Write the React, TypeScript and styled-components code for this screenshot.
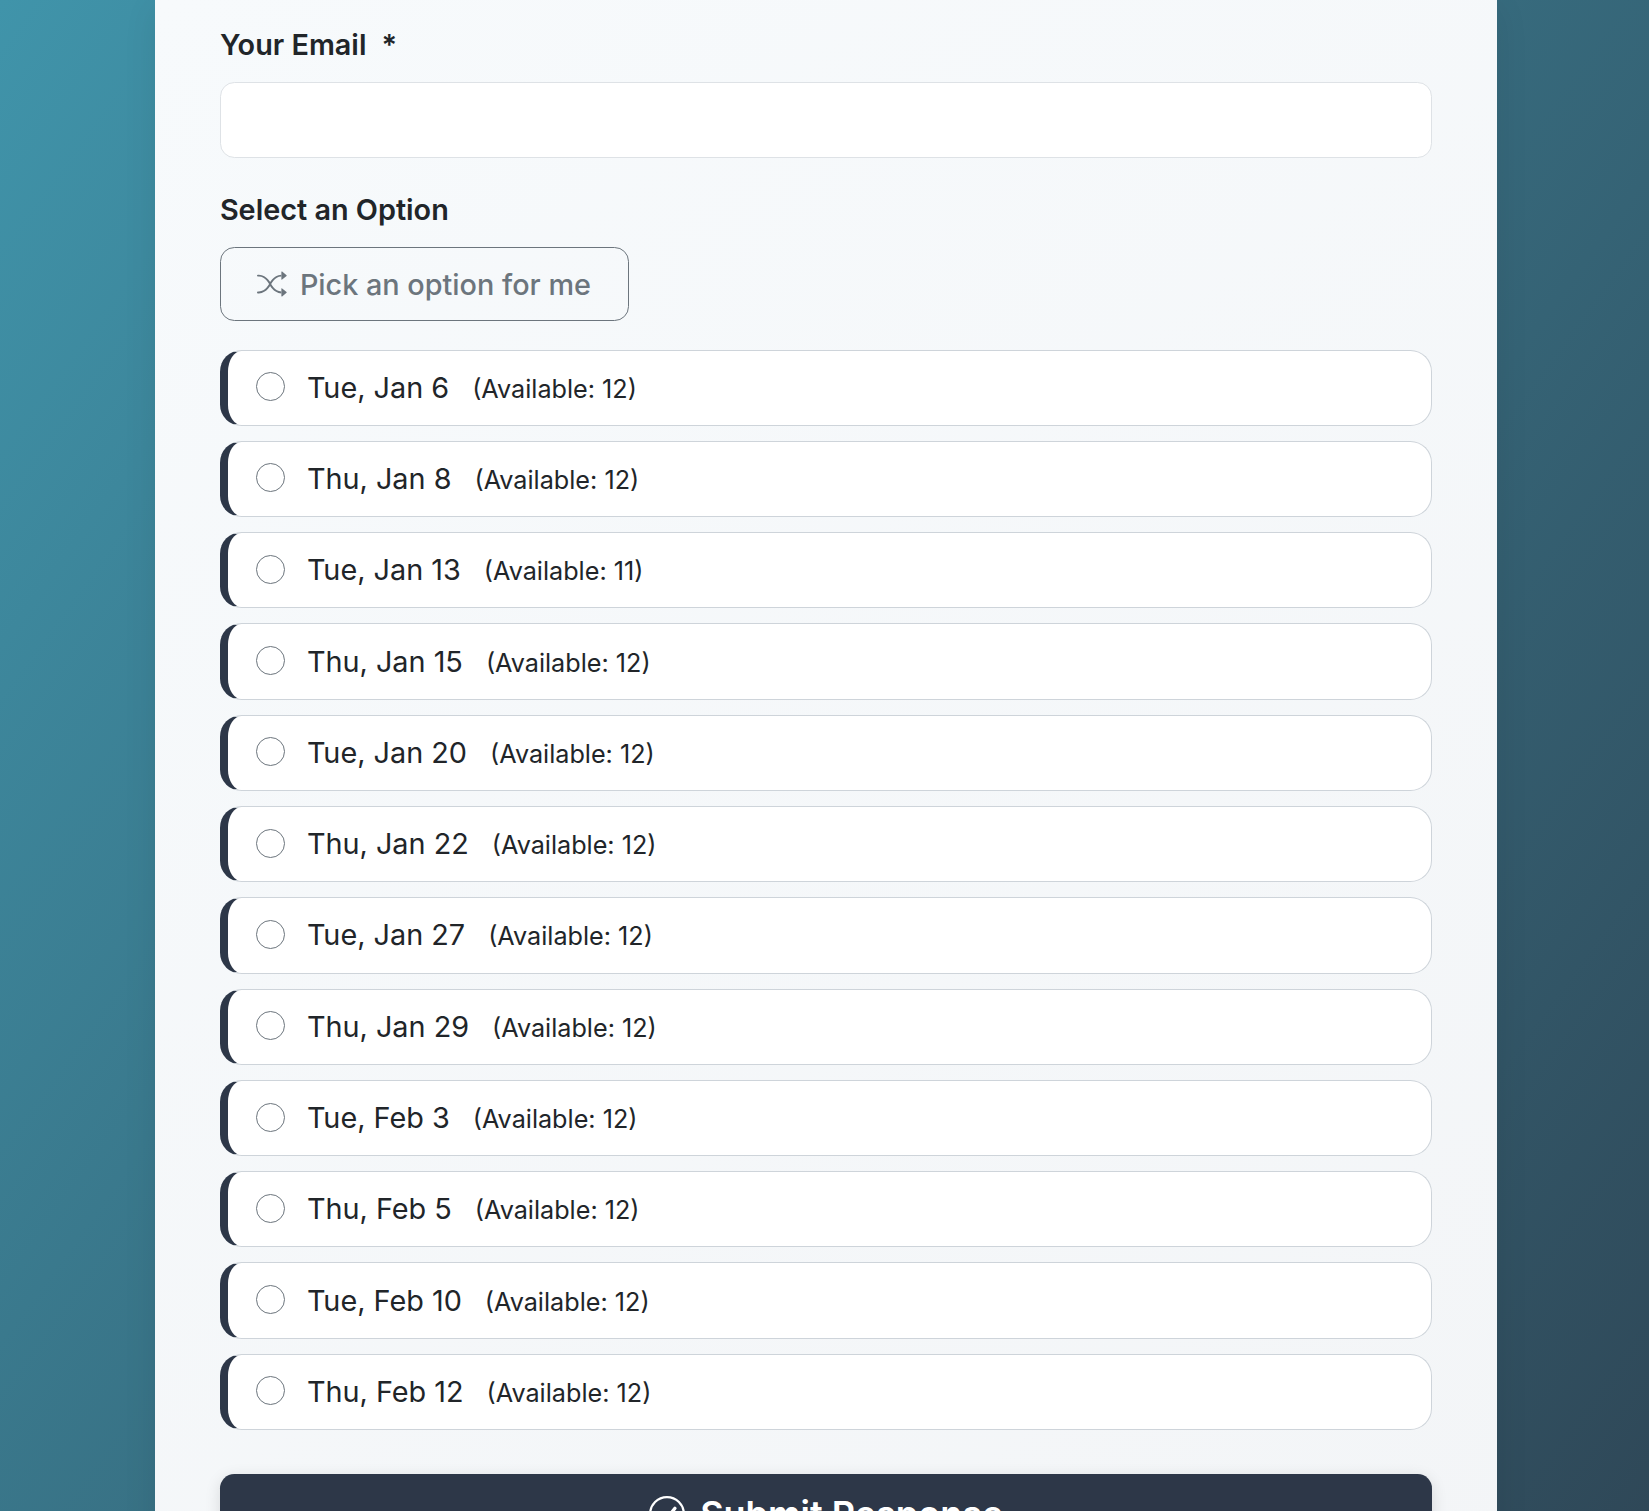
import React from "react";
import styled, { createGlobalStyle } from "styled-components";
import { BsShuffle, BsCheckCircle } from "react-icons/bs";

interface Slot {
  date: string;
  available: number;
}

const slots: Slot[] = [
  { date: "Tue, Jan 6", available: 12 },
  { date: "Thu, Jan 8", available: 12 },
  { date: "Tue, Jan 13", available: 11 },
  { date: "Thu, Jan 15", available: 12 },
  { date: "Tue, Jan 20", available: 12 },
  { date: "Thu, Jan 22", available: 12 },
  { date: "Tue, Jan 27", available: 12 },
  { date: "Thu, Jan 29", available: 12 },
  { date: "Tue, Feb 3", available: 12 },
  { date: "Thu, Feb 5", available: 12 },
  { date: "Tue, Feb 10", available: 12 },
  { date: "Thu, Feb 12", available: 12 },
];

function App() {
  return (
    <>
      <GlobalStyle />
      <Page>
        <Card>
          <Label>
            Your Email<Required>*</Required>
          </Label>
          <EmailInput type="email" />

          <Label>Select an Option</Label>
          <PickButton type="button">
            <BsShuffle size={30} />
            Pick an option for me
          </PickButton>

          <OptionList>
            {slots.map((slot) => (
              <Option key={slot.date}>
                <Radio type="radio" name="slot" />
                <OptionDate>{slot.date}</OptionDate>
                <Availability>(Available: {slot.available})</Availability>
              </Option>
            ))}
          </OptionList>

          <SubmitButton type="button">
            <BsCheckCircle size={36} />
            Submit Response
          </SubmitButton>
        </Card>
      </Page>
    </>
  );
}

export default App;

const GlobalStyle = createGlobalStyle`
  html, body {
    margin: 0;
    padding: 0;
  }

  body {
    font-family: Inter, "Liberation Sans", sans-serif;
    overflow: hidden;
  }
`;

const Page = styled.div`
  height: 1511px;
  box-sizing: border-box;
  padding-left: 3.4px;
  overflow: hidden;
  display: flex;
  justify-content: center;
  background: linear-gradient(126deg, #4094aa 0%, #2f4858 100%);
`;

const Card = styled.div`
  width: 1342.6px;
  height: 1600px;
  flex-shrink: 0;
  box-sizing: border-box;
  padding: 26px 65px 0;
  background: linear-gradient(145deg, #f7fafc 0%, #f3f5f7 100%);
  box-shadow: 0 8px 32px rgba(0, 0, 0, 0.08);
`;

const Label = styled.label`
  display: block;
  font-size: 28.8px;
  line-height: 38px;
  font-weight: 600;
  color: #212529;
`;

const Required = styled.span`
  margin-left: 15px;
`;

const EmailInput = styled.input`
  display: block;
  width: 100%;
  height: 76px;
  box-sizing: border-box;
  margin: 18px 0 33px;
  background: #fff;
  border: 1px solid #dee2e6;
  border-radius: 14.4px;
  outline: none;
`;

const PickButton = styled.button`
  display: flex;
  align-items: center;
  gap: 13px;
  height: 74px;
  box-sizing: border-box;
  margin-top: 18px;
  padding: 0 37px 0 36px;
  background: transparent;
  border: 1px solid #6c757d;
  border-radius: 14.4px;
  color: #6c757d;
  font-family: inherit;
  font-size: 28.8px;
  font-weight: 500;
`;

const OptionList = styled.div`
  display: flex;
  flex-direction: column;
  gap: 15px;
  margin-top: 28.5px;
`;

const Option = styled.label`
  display: flex;
  align-items: center;
  height: 76.3px;
  box-sizing: border-box;
  padding-left: 28px;
  background: #fff;
  border: 1px solid #ced4da;
  border-left: 8px solid #2d3748;
  border-radius: 21.6px;
`;

const Radio = styled.input`
  appearance: none;
  width: 29px;
  height: 29px;
  margin: 0 22px 2px 0;
  background: #fff;
  border: 1px solid #6c757d;
  border-radius: 50%;
`;

const OptionDate = styled.span`
  padding-bottom: 1px;
  font-size: 28.8px;
  color: #212529;
`;

const Availability = styled.span`
  margin-left: 23px;
  padding-top: 2px;
  font-size: 25.2px;
  color: #212529;
`;

const SubmitButton = styled.button`
  display: flex;
  align-items: center;
  justify-content: center;
  gap: 15px;
  width: 100%;
  height: 81px;
  margin-top: 43.5px;
  background: #2d3748;
  border: none;
  border-radius: 14.4px;
  box-shadow: 0 4px 16px rgba(0, 0, 0, 0.12);
  color: #fff;
  font-family: inherit;
  font-size: 36px;
  font-weight: 600;
`;
